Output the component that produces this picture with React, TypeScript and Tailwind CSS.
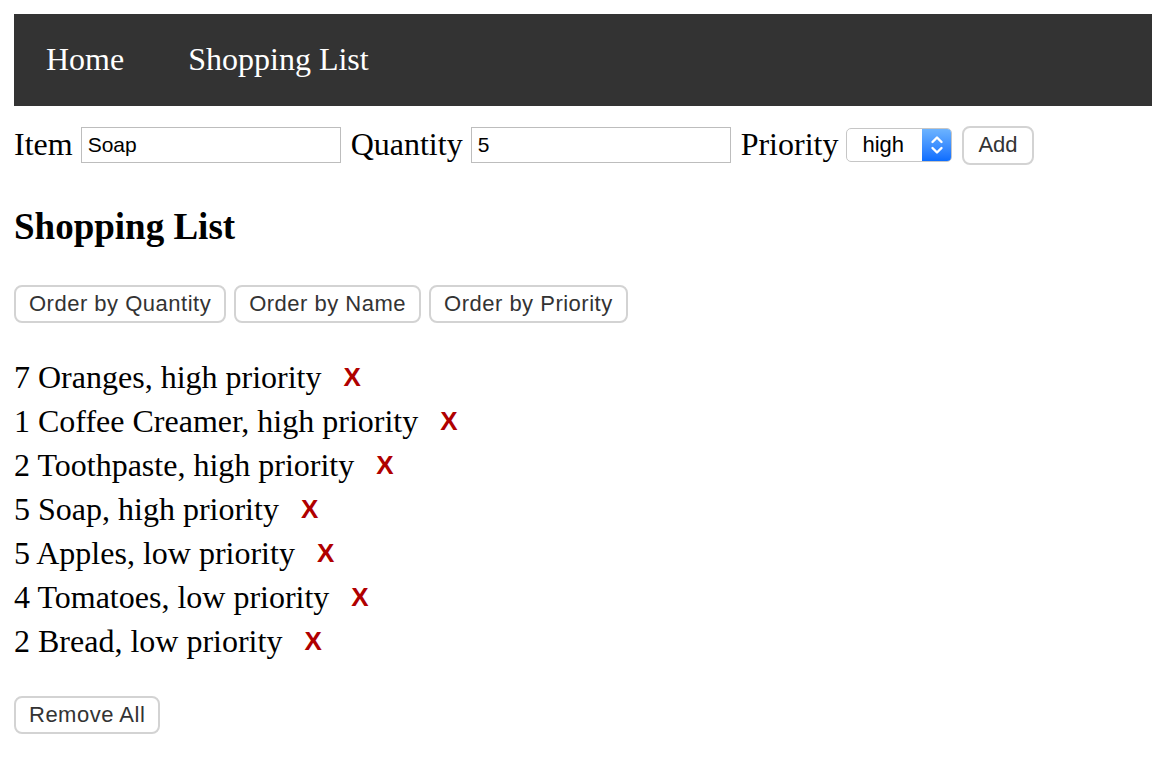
import React from "react";

const items = [
  { qty: 7, name: "Oranges", priority: "high" },
  { qty: 1, name: "Coffee Creamer", priority: "high" },
  { qty: 2, name: "Toothpaste", priority: "high" },
  { qty: 5, name: "Soap", priority: "high" },
  { qty: 5, name: "Apples", priority: "low" },
  { qty: 4, name: "Tomatoes", priority: "low" },
  { qty: 2, name: "Bread", priority: "low" },
];

const serif = "font-['Liberation_Serif','Times_New_Roman',serif]";
const sans = "font-['Liberation_Sans',Arial,sans-serif]";

function Btn({ children, className = "" }: { children: React.ReactNode; className?: string }) {
  return (
    <button
      className={`h-[38px] px-[13px] rounded-[8px] border-2 border-[#d3d3d3] bg-white text-[22px] leading-none tracking-[0.5px] text-[#333] ${sans} ${className}`}
    >
      {children}
    </button>
  );
}

export default function App() {
  return (
    <div className={`min-h-[758px] bg-white pt-[14px] pl-[14px] text-black ${serif}`}>
      {/* Nav */}
      <nav className="flex h-[92px] items-center bg-[#333333] text-[32px] text-white">
        <a className="px-[32px] -mt-[2px]">Home</a>
        <a className="px-[32px] -mt-[2px]">Shopping List</a>
      </nav>

      {/* Add form */}
      <div className="mt-[19px] flex h-[40px] items-center text-[32px]">
        <span className="-mt-[2px]">Item</span>
        <input
          readOnly
          value="Soap"
          className={`ml-[8px] h-[36px] w-[260px] border border-[#bdbdbd] px-[6px] text-[21px] text-black outline-none ${sans}`}
        />
        <span className="ml-[10px] -mt-[2px]">Quantity</span>
        <input
          readOnly
          value="5"
          className={`ml-[8px] h-[36px] w-[260px] border border-[#bdbdbd] px-[6px] text-[21px] text-black outline-none ${sans}`}
        />
        <span className="ml-[10px] -mt-[2px]">Priority</span>
        <div
          className={`ml-[8px] flex h-[34px] w-[106px] overflow-hidden rounded-[5px] border border-[#c6c6c6] bg-white text-[22px] ${sans}`}
        >
          <span className="flex flex-1 items-center pl-[15px] leading-none">high</span>
          <span className="flex w-[29px] items-center justify-center bg-gradient-to-b from-[#6cb3ff] to-[#0a6cff]">
            <svg width="14" height="22" viewBox="0 0 14 22" fill="none" stroke="white" strokeWidth="2.4" strokeLinecap="round" strokeLinejoin="round">
              <path d="M2.5 8 L7 3.5 L11.5 8" />
              <path d="M2.5 14 L7 18.5 L11.5 14" />
            </svg>
          </span>
        </div>
        <Btn className="ml-[10px] h-[39px] px-[14px] tracking-normal">Add</Btn>
      </div>

      <h2 className="mt-[40px] text-[37px] leading-[44px] font-bold">Shopping List</h2>

      <div className="mt-[36px] flex gap-[8px]">
        <Btn>Order by Quantity</Btn>
        <Btn>Order by Name</Btn>
        <Btn>Order by Priority</Btn>
      </div>

      <ul className="mt-[32px] text-[32px] leading-[44px]">
        {items.map((it) => (
          <li key={it.name} className="flex items-center">
            <span>
              {it.qty} {it.name}, {it.priority} priority
            </span>
            <span className={`ml-[22px] text-[26px] font-bold text-[#b00000] ${sans}`}>X</span>
          </li>
        ))}
      </ul>

      <Btn className="mt-[33px]">Remove All</Btn>
    </div>
  );
}
